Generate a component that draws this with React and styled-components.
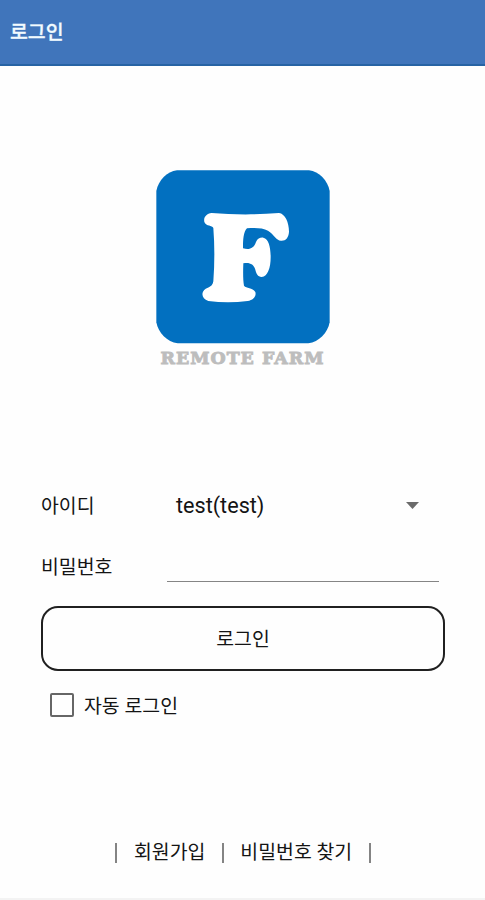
import React from "react";
import styled, { createGlobalStyle } from "styled-components";

const GlobalStyle = createGlobalStyle`
  * { box-sizing: border-box; }
  body {
    margin: 0;
    background: #fefefe;
    color: #141414;
    font-family: Roboto, "Noto Sans CJK KR", sans-serif;
    font-size: 19.4px;
  }
`;

const Screen = styled.div`
  height: 900px;
  display: flex;
  flex-direction: column;
  overflow: hidden;
  border-bottom: 2px solid #f3f3f3;
`;

const AppBar = styled.header`
  flex: none;
  height: 66px;
  padding: 2px 10px 0;
  display: flex;
  align-items: center;
  background: #4075bb;
  border-bottom: 2px solid #2763a4;
`;

const Title = styled.h1`
  margin: 0;
  font-size: 19.4px;
  line-height: 28px;
  font-weight: 500;
  color: #f2fbff;
  -webkit-text-stroke: 0.3px #f2fbff;
`;

const Brand = styled.div`
  margin-top: 104px;
  height: 200px;
  display: flex;
  flex-direction: column;
  align-items: center;
`;

const Logo = styled.svg`
  flex: none;
  display: block;
  width: 174px;
  height: 174px;
`;

const BrandName = styled.div`
  margin-top: 4px;
  font: bold 17.4px/20px "DejaVu Serif", serif;
  letter-spacing: 1px;
  white-space: nowrap;
  color: #bdbdbd;
  -webkit-text-stroke: 0.9px #bdbdbd;
`;

const Form = styled.form`
  margin: 106px 40px 0 41px;
  display: flex;
  flex-direction: column;
`;

const Row = styled.div`
  height: ${(p) => p.$height}px;
  display: grid;
  grid-template-columns: 126px 272px;
  align-items: center;
`;

const Label = styled.label`
  line-height: 28px;
  padding-top: ${(p) => p.$shift || 0}px;
`;

const Select = styled.div`
  display: flex;
  align-items: center;
  justify-content: space-between;
  padding: 0 20px 0 9px;
  font-size: 21.6px;
  line-height: 28px;
`;

const Arrow = styled.svg`
  display: block;
  width: 13px;
  height: 7px;
  margin-bottom: 2px;
`;

const PasswordInput = styled.input`
  width: 272px;
  height: 46px;
  padding: 0 9px;
  border: 0;
  border-bottom: 1.5px solid #858585;
  outline: 0;
  background: transparent;
  font: inherit;
  align-self: start;
`;

const LoginButton = styled.button`
  margin-top: 6px;
  width: 404px;
  height: 65px;
  padding: 0 0 2px;
  border: 2px solid #202020;
  border-radius: 17px;
  background: #fefefe;
  color: inherit;
  font: inherit;
`;

const AutoLogin = styled.label`
  margin: 20px 0 0 9px;
  height: 28px;
  display: flex;
  align-items: center;
  gap: 10px;
`;

const AutoLoginText = styled.span`
  padding-bottom: 2px;
`;

const CheckBox = styled.span`
  width: 24px;
  height: 24px;
  border: 2px solid #666;
  border-radius: 2px;
`;

const Links = styled.nav`
  margin-top: 120px;
  padding-left: 115px;
  height: 28px;
  display: flex;
  align-items: center;
`;

const Link = styled.a`
  margin: 0 ${(p) => p.$after}px 0 ${(p) => p.$before}px;
  line-height: 28px;
  white-space: nowrap;
`;

const Divider = styled.span`
  width: 2px;
  height: 20px;
  background: #848484;
`;

export default function App() {
  return (
    <>
      <GlobalStyle />
      <Screen>
        <AppBar>
          <Title>로그인</Title>
        </AppBar>
        <Brand>
          <Logo viewBox="33 31 522 522" role="img" aria-label="Remote Farm">
            <path
              fill="#0270c0"
              d="M96 32H492C522 36 548 62 554 94V488C548 520 522 547 490 551H98C66 547 40 520 34 488V94C40 62 66 36 96 32Z"
            />
            <path
              fill="#fff"
              d="M200 160C262 165 330 166 402 160C420 162 432 188 432 216C431 234 422 244 408 243C393 242 387 224 369 213C353 204 328 204 306 206C295 217 294 240 294 266C313 271 326 267 333 247C338 236 346 233 355 234C371 237 377 263 377 292C377 325 368 350 350 352C338 351 334 342 331 330C326 312 312 307 295 311C294 337 294 362 297 378C304 387 322 383 331 397C335 410 324 422 308 424C268 429 230 429 190 424C175 419 169 407 174 396C183 380 202 387 205 365C209 310 209 257 205 205C201 196 184 201 178 187C175 173 184 162 200 160Z"
            />
          </Logo>
          <BrandName>REMOTE FARM</BrandName>
        </Brand>
        <Form>
          <Row $height={60}>
            <Label $shift={2}>아이디</Label>
            <Select>
              test(test)
              <Arrow viewBox="0 0 13 7">
                <path d="M0 0H13L6.5 7Z" fill="#6b6b6b" />
              </Arrow>
            </Select>
          </Row>
          <Row $height={64}>
            <Label htmlFor="password">비밀번호</Label>
            <PasswordInput id="password" type="password" />
          </Row>
          <LoginButton type="button">로그인</LoginButton>
          <AutoLogin>
            <CheckBox />
            <AutoLoginText>자동 로그인</AutoLoginText>
          </AutoLogin>
        </Form>
        <Links>
          <Divider />
          <Link $before={17} $after={17}>회원가입</Link>
          <Divider />
          <Link $before={16} $after={17}>비밀번호 찾기</Link>
          <Divider />
        </Links>
      </Screen>
    </>
  );
}
